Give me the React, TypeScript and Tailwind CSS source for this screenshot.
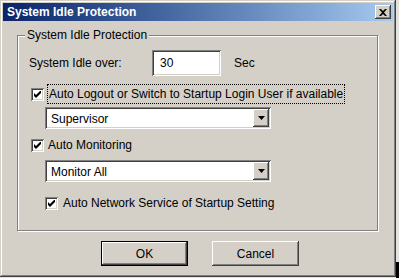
import React from "react";

const raised =
  "bg-[#d4d0c8] shadow-[inset_-1px_-1px_0_#404040,inset_1px_1px_0_#ffffff,inset_-2px_-2px_0_#808080,inset_2px_2px_0_#d4d0c8]";
const sunken =
  "bg-white shadow-[inset_1px_1px_0_#808080,inset_-1px_-1px_0_#ffffff,inset_2px_2px_0_#404040,inset_-2px_-2px_0_#d4d0c8]";

function Check() {
  return (
    <div className={`w-[13px] h-[13px] shrink-0 flex items-center justify-center ${sunken}`}>
      <svg width="7" height="7" viewBox="0 0 7 7">
        <path d="M0 2 L0 5 L2 7 L7 2 L7 -1 L2 4 Z" fill="#000" />
      </svg>
    </div>
  );
}

function Combo({ value }: { value: string }) {
  return (
    <div className={`ml-[27px] w-[226px] h-[22px] flex items-center ${sunken}`}>
      <span className="flex-1 pl-[6px] pt-[1px]">{value}</span>
      <div className={`w-[16px] h-[18px] mr-[2px] flex items-center justify-center ${raised}`}>
        <svg width="7" height="4" viewBox="0 0 7 4">
          <path d="M0 0 H7 L3.5 4 Z" fill="#000" />
        </svg>
      </div>
    </div>
  );
}

export default function App() {
  return (
    <div
      className="w-[399px] h-[278px] flex bg-[#e4e2dc] text-[12px] text-black leading-none"
      style={{ fontFamily: '"Liberation Sans", Arial, sans-serif' }}
    >
      <div className="w-[396px] h-[277px] flex flex-col bg-[#d4d0c8] shadow-[inset_-1px_-1px_0_#404040,inset_1px_1px_0_#d4d0c8,inset_-2px_-2px_0_#808080,inset_2px_2px_0_#ffffff] px-[3px] pt-[3px]">
        {/* Title bar */}
        <div className="h-[18px] flex items-center bg-gradient-to-r from-[#0a246a] to-[#a6caf0] pl-[4px] pr-[2px]">
          <span className="flex-1 text-white font-bold text-[12px]">System Idle Protection</span>
          <div className={`w-[16px] h-[14px] flex items-center justify-center ${raised}`}>
            <svg width="8" height="7" viewBox="0 0 8 7">
              <path d="M0 0 H2 L4 2 L6 0 H8 L5 3.5 L8 7 H6 L4 5 L2 7 H0 L3 3.5 Z" fill="#000" />
            </svg>
          </div>
        </div>

        {/* Group box */}
        <div className="relative mt-[14px] ml-[14px] w-[361px] h-[196px] border border-[#808080] shadow-[inset_1px_1px_0_#ffffff,1px_1px_0_#ffffff] flex flex-col">
          <span className="absolute left-[7px] top-[-7px] px-[2px] bg-[#d4d0c8]">System Idle Protection</span>

          <div className="mt-[14px] pl-[11px] flex items-center h-[26px]">
            <span className="w-[123px]">System Idle over:</span>
            <div className={`w-[69px] h-[26px] flex items-center pl-[8px] ${sunken}`}>30</div>
            <span className="ml-[13px]">Sec</span>
          </div>

          <div className="mt-[8px] pl-[13px] flex items-center h-[20px]">
            <Check />
            <span className="ml-[3px] h-[20px] flex items-center px-[1px] border border-dotted border-black">
              Auto Logout or Switch to Startup Login User if available
            </span>
          </div>

          <div className="mt-[3px]">
            <Combo value="Supervisor" />
          </div>

          <div className="mt-[6px] pl-[13px] flex items-center h-[20px]">
            <Check />
            <span className="ml-[4px]">Auto Monitoring</span>
          </div>

          <div className="mt-[5px]">
            <Combo value="Monitor All" />
          </div>

          <div className="mt-[11px] pl-[27px] flex items-center h-[20px]">
            <Check />
            <span className="ml-[5px]">Auto Network Service of Startup Setting</span>
          </div>
        </div>

        {/* Buttons */}
        <div className="mt-[10px] pl-[98px] flex gap-[24px]">
          <div className="w-[87px] h-[25px] border border-black">
            <div className={`w-full h-full flex items-center justify-center ${raised}`}>OK</div>
          </div>
          <div className={`w-[87px] h-[25px] flex items-center justify-center ${raised}`}>Cancel</div>
        </div>
      </div>
      <div className="flex-1 flex flex-col">
        <div className="h-[262px]" />
        <div className="flex-1 bg-black" />
      </div>
    </div>
  );
}
